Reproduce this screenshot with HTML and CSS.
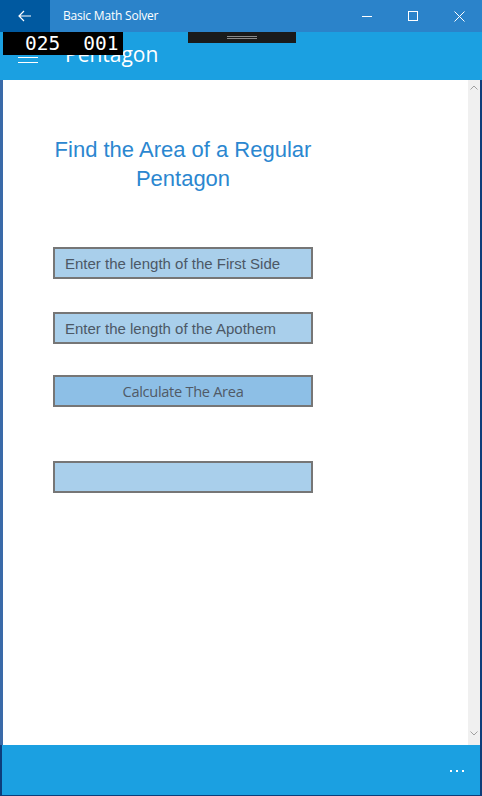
FILE: index.html
```html
<!DOCTYPE html>
<html>
<head>
<meta charset="utf-8">
<link rel="stylesheet" href="styles.css">
</head>
<body>
<div class="window">
  <div class="titlebar">
    <div class="back">
      <svg width="14" height="12" viewBox="0 0 14 12"><path d="M6 1 L1 6 L6 11 M1 6 H13" fill="none" stroke="#fff" stroke-width="1.2"/></svg>
    </div>
    <div class="wtitle">Basic Math Solver</div>
    <div class="controls">
      <div class="ctl"><svg width="10" height="10" viewBox="0 0 10 10"><path d="M0 5.5 H10" stroke="#fff" stroke-width="1"/></svg></div>
      <div class="ctl"><svg width="10" height="10" viewBox="0 0 10 10"><rect x="0.5" y="0.5" width="9" height="9" fill="none" stroke="#fff" stroke-width="1"/></svg></div>
      <div class="ctl"><svg width="11" height="11" viewBox="0 0 11 11"><path d="M0.5 0.5 L10.5 10.5 M10.5 0.5 L0.5 10.5" stroke="#fff" stroke-width="1"/></svg></div>
    </div>
  </div>
  <div class="appbar">
    <div class="hamburger"><span></span><span></span><span></span></div>
    <div class="apptitle">Pentagon</div>
  </div>
  <div class="counter"><span>025</span><span>001</span></div>
  <div class="grab"><span></span><span></span></div>
  <div class="main">
    <div class="edge-left"></div>
    <div class="content">
      <div class="form">
        <h1 class="heading"><span class="line">Find the Area of a Regular</span> <span class="line">Pentagon</span></h1>
        <div class="field">Enter the length of the First Side</div>
        <div class="field second">Enter the length of the Apothem</div>
        <div class="button">Calculate The Area</div>
        <div class="field result"></div>
      </div>
    </div>
    <div class="scrollbar">
      <svg class="arrow" width="8" height="5" viewBox="0 0 8 5"><path d="M0.5 4.5 L4 1 L7.5 4.5" fill="none" stroke="#a0a0a0" stroke-width="1"/></svg>
      <svg class="arrow" width="8" height="5" viewBox="0 0 8 5"><path d="M0.5 0.5 L4 4 L7.5 0.5" fill="none" stroke="#a0a0a0" stroke-width="1"/></svg>
    </div>
    <div class="edge-right"></div>
  </div>
  <div class="bottombar">
    <div class="more"><span></span><span></span><span></span></div>
  </div>
  <div class="bottom-edge"></div>
</div>
</body>
</html>
```
FILE: styles.css
```css
* { box-sizing: border-box; }
html, body { margin: 0; padding: 0; }
body {
  width: 482px;
  height: 796px;
  overflow: hidden;
  background: #0d3d7a;
  font-family: "Segoe UI", "Open Sans", "Noto Sans", sans-serif;
}
.window {
  position: relative;
  width: 482px;
  height: 796px;
  display: flex;
  flex-direction: column;
}
.titlebar {
  height: 32px;
  display: flex;
  align-items: stretch;
  background: #2b83ca;
  color: #fff;
}
.back {
  width: 50px;
  background: #0059a0;
  display: flex;
  align-items: center;
  justify-content: center;
}
.wtitle {
  flex: 1;
  padding-left: 13px;
  font-size: 12px;
  line-height: 32px;
  font-family: "Open Sans", "Noto Sans", sans-serif;
  letter-spacing: -0.2px;
}
.controls { display: flex; }
.ctl {
  width: 46px;
  display: flex;
  align-items: center;
  justify-content: center;
}
.appbar {
  height: 48px;
  background: #1ba0e1;
  display: flex;
  align-items: flex-end;
  padding-bottom: 14px;
}
.hamburger {
  width: 20px;
  margin-left: 18px;
  display: flex;
  flex-direction: column;
  gap: 4px;
  margin-bottom: 3px;
}
.hamburger span {
  display: block;
  height: 1px;
  background: #fff;
}
.apptitle {
  margin-left: 27px;
  color: #fff;
  font-size: 21px;
  line-height: 24px;
  font-family: "Open Sans", "Noto Sans", sans-serif;
}
.counter {
  position: absolute;
  left: 3px;
  top: 32px;
  width: 120px;
  height: 23px;
  background: #000;
  color: #fff;
  font-family: "DejaVu Sans Mono", monospace;
  font-size: 19.5px;
  line-height: 23px;
  display: flex;
  gap: 23px;
  padding-left: 22px;
}
.grab {
  position: absolute;
  left: 188px;
  top: 32px;
  width: 108px;
  height: 11px;
  background: #1a1a1a;
  display: flex;
  flex-direction: column;
  align-items: center;
  padding-top: 4px;
  gap: 1px;
}
.grab span {
  width: 30px;
  height: 1px;
  background: #8a8a8a;
}
.main {
  height: 665px;
  display: flex;
}
.edge-left { width: 3px; background: #3a6aa8; }
.edge-right { width: 2px; background: #0d3d7a; }
.content {
  flex: 1;
  background: #fff;
}
.form {
  width: 260px;
  margin-left: 50px;
  padding-top: 55px;
  display: flex;
  flex-direction: column;
}
.heading {
  margin: 0 0 54px 0;
  font-family: "Liberation Sans", Arial, sans-serif;
  font-weight: normal;
  font-size: 22px;
  line-height: 29px;
  color: #2b87d0;
  text-align: center;
}
.heading .line {
  display: block;
  white-space: nowrap;
}
.field {
  height: 32px;
  border: 2px solid #767676;
  background: #a9cfeb;
  font-family: "Liberation Sans", Arial, sans-serif;
  font-size: 15px;
  line-height: 29px;
  color: #4c5866;
  padding-left: 10px;
  margin-bottom: 33px;
}
.field.second { margin-bottom: 31px; }
.button {
  height: 32px;
  border: 2px solid #767676;
  background: #8dbfe6;
  font-family: "Open Sans", "Noto Sans", sans-serif;
  font-size: 14.6px;
  line-height: 29px;
  color: #505a66;
  text-align: center;
  margin-bottom: 54px;
  letter-spacing: -0.3px;
}
.result { margin-bottom: 0; }
.scrollbar {
  width: 12px;
  background: #f0f0f0;
  display: flex;
  flex-direction: column;
  justify-content: space-between;
  align-items: center;
  padding: 5px 0 9px 0;
}
.bottombar {
  height: 50px;
  margin-left: 2px;
  margin-right: 2px;
  background: #1ba0e1;
  display: flex;
  justify-content: flex-end;
  align-items: flex-start;
  padding-top: 25px;
  padding-right: 16px;
}
.more { display: flex; gap: 4px; }
.more span {
  width: 2px;
  height: 2px;
  background: #fff;
}
.bottom-edge { height: 1px; }
```
